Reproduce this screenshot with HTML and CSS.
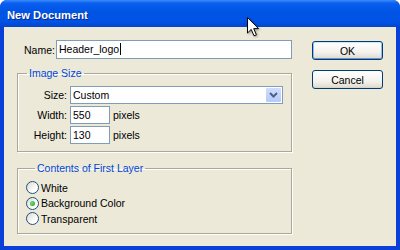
FILE: index.html
```html
<!DOCTYPE html>
<html lang="en">
<head>
<meta charset="UTF-8" />
<title>New Document</title>
<link rel="stylesheet" href="styles.css">
</head>
<body>

<div class="window">
  <div class="titlebar">New Document</div>

  <div class="frame">
    <div class="main">
      <!-- NAME -->
      <div class="name-row">
        <label class="name-label">Name:</label>
        <div class="field name-field"><span class="caret">Header_logo</span></div>
      </div>

      <!-- IMAGE SIZE -->
      <fieldset class="group size-group">
        <legend>Image Size</legend>
        <div class="size-grid">
          <label>Size:</label>
          <div class="select">
            <span class="select-value">Custom</span>
            <span class="drop">
              <svg width="9" height="6" viewBox="0 0 9 6"><polyline points="1,1 4.5,4.5 8,1" fill="none" stroke="#4d6185" stroke-width="2"/></svg>
            </span>
          </div>
          <label>Width:</label>
          <div class="unit-row"><div class="field num">550</div><span>pixels</span></div>
          <label>Height:</label>
          <div class="unit-row"><div class="field num">130</div><span>pixels</span></div>
        </div>
      </fieldset>

      <!-- CONTENTS -->
      <fieldset class="group layer-group">
        <legend>Contents of First Layer</legend>
        <div class="radio-row"><span class="radio"></span>White</div>
        <div class="radio-row"><span class="radio checked"></span>Background Color</div>
        <div class="radio-row"><span class="radio"></span>Transparent</div>
      </fieldset>
    </div>

    <div class="buttons">
      <button class="btn default">OK</button>
      <button class="btn">Cancel</button>
    </div>
  </div>

  <!-- mouse pointer -->
  <svg class="pointer" width="14" height="22" viewBox="0 0 14 22">
    <polygon points="0.5,0.5 0.5,16 4.2,12.4 7,18.8 9.4,17.8 6.7,11.6 11.5,11.6" fill="#fff" stroke="#000" stroke-width="1" stroke-linejoin="round"/>
  </svg>
</div>

</body>
</html>
```

FILE: styles.css
```css
/* Base */
* {
  box-sizing: border-box;
}
body {
  margin: 0;
  background: #ffffff;
  font-family: 'Liberation Sans', Arial, sans-serif;
  font-size: 10.5px;
  color: #000;
}

/* Window frame */
.window {
  position: relative;
  width: 400px;
  height: 250px;
  display: flex;
  flex-direction: column;
  background: #0a3fd8;
  border-radius: 7px 7px 0 0;
  overflow: hidden;
}

.titlebar {
  height: 27px;
  padding: 2px 0 0 7px;
  display: flex;
  align-items: center;
  color: #fff;
  font-weight: 700;
  font-size: 11.2px;
  text-shadow: 1px 1px 0 #0a2a8a;
  background: linear-gradient(to bottom, #3b8cf8 0%, #0a5ef0 12%, #0054e3 45%, #0152e6 80%, #0446c9 100%);
}

.frame {
  flex: 1;
  margin: 0 4px 4px;
  padding: 13px 13px 0 13px;
  display: flex;
  gap: 20px;
  background: #ece9d8;
}

.main {
  width: 275px;
}

/* Name row */
.name-row {
  display: flex;
  align-items: center;
  padding-left: 7px;
}
.name-label {
  width: 32px;
}
.name-field {
  flex: 1;
}

.field {
  height: 19px;
  padding-left: 2px;
  background: #fff;
  border: 1px solid #7f9db9;
  line-height: 17px;
  white-space: nowrap;
}
.caret {
  padding-right: 1px;
  border-right: 1px solid #000;
}

/* Group boxes */
.group {
  margin: 0;
  min-width: 0;
  border: 1px solid #aca899;
  box-shadow: inset 1px 1px 0 #fff, 1px 1px 0 #fff;
}
.group legend {
  margin-left: 9px;
  padding: 0 2px;
  line-height: 12px;
  color: #0046d5;
}

.size-group {
  margin-top: 8px;
  padding: 7px 8px 7px 0;
}
.size-grid {
  display: grid;
  grid-template-columns: 49px 1fr;
  grid-auto-rows: 18px;
  column-gap: 3px;
  row-gap: 2px;
  align-items: center;
}
.size-grid label {
  text-align: right;
}

.select {
  height: 18px;
  display: flex;
  align-items: center;
  justify-content: space-between;
  padding: 1px 1px 1px 2px;
  background: #fff;
  border: 1px solid #7f9db9;
}
.drop {
  width: 15px;
  height: 100%;
  display: flex;
  align-items: center;
  justify-content: center;
  border-radius: 1px;
  background: linear-gradient(to bottom, #cfdcfd, #b6cbfb);
}

.unit-row {
  display: flex;
  align-items: center;
  gap: 3px;
}
.field.num {
  width: 40px;
  height: 18px;
  line-height: 16px;
}

.layer-group {
  margin-top: 10px;
  padding: 6px 8px 6px 8px;
}
.radio-row {
  height: 15.5px;
  display: flex;
  align-items: center;
  gap: 2px;
}
.radio {
  width: 13px;
  height: 13px;
  border-radius: 50%;
  border: 1px solid #1c5180;
  background: linear-gradient(135deg, #dcd9cd, #ffffff 70%);
  display: flex;
  align-items: center;
  justify-content: center;
}
.radio.checked::after {
  content: "";
  width: 5px;
  height: 5px;
  border-radius: 50%;
  background: radial-gradient(circle at 35% 35%, #6ee06e, #21a121);
}

/* Buttons */
.buttons {
  width: 71px;
  padding-top: 1px;
  display: flex;
  flex-direction: column;
  gap: 10px;
}
.btn {
  height: 19px;
  padding: 0;
  font-family: 'Liberation Sans', Arial, sans-serif;
  font-size: 10.5px;
  color: #000;
  border: 1px solid #003c74;
  border-radius: 3px;
  background: linear-gradient(to bottom, #ffffff, #f3f2ed 60%, #e3e0d4 90%, #d6d0c5);
}
.btn.default {
  box-shadow: inset 0 1px 0 #cee7ff, inset 1px 0 0 #98b8ea, inset -1px 0 0 #98b8ea, inset 0 -1px 0 #6a8fd4;
}

/* Mouse pointer over the title bar */
.pointer {
  position: absolute;
  left: 247px;
  top: 17px;
  filter: drop-shadow(1px 1px 1px rgba(0,0,0,0.35));
}
```
